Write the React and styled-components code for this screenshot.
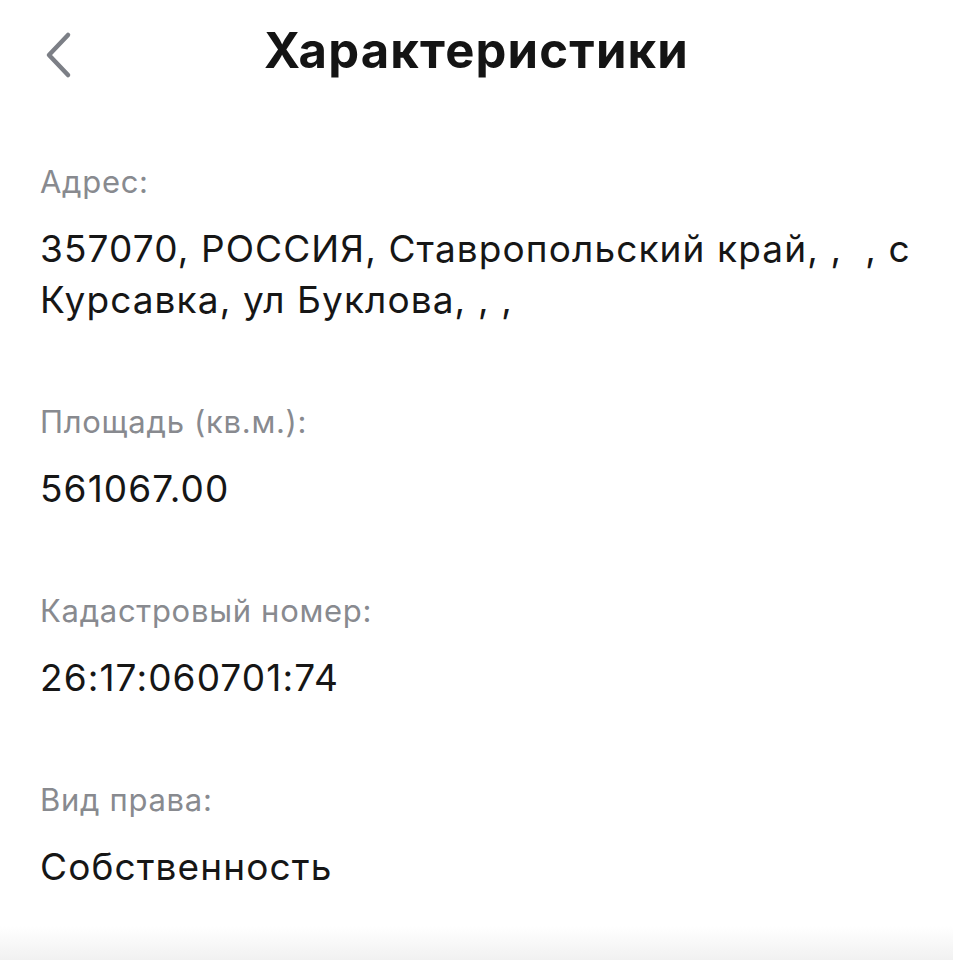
import React from "react";
import styled, { createGlobalStyle } from "styled-components";

const Global = createGlobalStyle`
  html, body { margin: 0; padding: 0; background: #ffffff; }
  body { font-family: Inter, "Noto Sans", sans-serif; -webkit-font-smoothing: antialiased; }
`;

const Screen = styled.div`
  min-height: 960px;
  display: flex;
  flex-direction: column;
  background: #ffffff;
`;

const Header = styled.header`
  position: relative;
  height: 104px;
  display: flex;
  align-items: center;
  justify-content: center;
`;

const BackButton = styled.button`
  position: absolute;
  left: 40px;
  top: 30px;
  width: 36px;
  height: 50px;
  padding: 0;
  border: 0;
  background: transparent;
  display: flex;
  align-items: center;
  justify-content: center;
`;

const Title = styled.h1`
  margin: 0;
  margin-top: -2px;
  font-family: Inter, "Noto Sans", sans-serif;
  font-weight: 700;
  font-size: 49px;
  line-height: 60px;
  color: #141414;
  letter-spacing: 1.2px;
`;

const List = styled.main`
  display: flex;
  flex-direction: column;
  gap: 77px;
  padding: 58px 40px 0 40px;
`;

const Field = styled.section`
  display: flex;
  flex-direction: column;
  gap: 21px;
`;

const Label = styled.div`
  font-family: Inter, "Noto Sans", sans-serif;
  font-weight: 400;
  font-size: 31px;
  line-height: 40px;
  color: #888a8f;
  letter-spacing: 0.7px;
`;

const Value = styled.div`
  font-family: Inter, "Noto Sans", sans-serif;
  font-weight: 400;
  font-size: 37px;
  line-height: 51px;
  color: #161616;
  letter-spacing: 1.1px;
  white-space: pre-wrap;
`;

const Footer = styled.div`
  margin-top: auto;
  height: 34px;
  background: linear-gradient(to bottom, #ffffff 0%, #f1f1f1 100%);
`;

const fields = [
  { label: "Адрес:", value: "357070, РОССИЯ, Ставропольский край, ,  , с\nКурсавка, ул Буклова, , ," },
  { label: "Площадь (кв.м.):", value: "561067.00" },
  { label: "Кадастровый номер:", value: "26:17:060701:74" },
  { label: "Вид права:", value: "Собственность" },
];

export default function App() {
  return (
    <Screen>
      <Global />
      <Header>
        <BackButton aria-label="Назад">
          <svg width="30" height="48" viewBox="0 0 30 48" fill="none">
            <path d="M25 4 L6 24 L25 44" stroke="#7c7f86" strokeWidth="4.5" strokeLinecap="round" strokeLinejoin="round" />
          </svg>
        </BackButton>
        <Title>Характеристики</Title>
      </Header>
      <List>
        {fields.map((f) => (
          <Field key={f.label}>
            <Label>{f.label}</Label>
            <Value>{f.value}</Value>
          </Field>
        ))}
      </List>
      <Footer />
    </Screen>
  );
}
